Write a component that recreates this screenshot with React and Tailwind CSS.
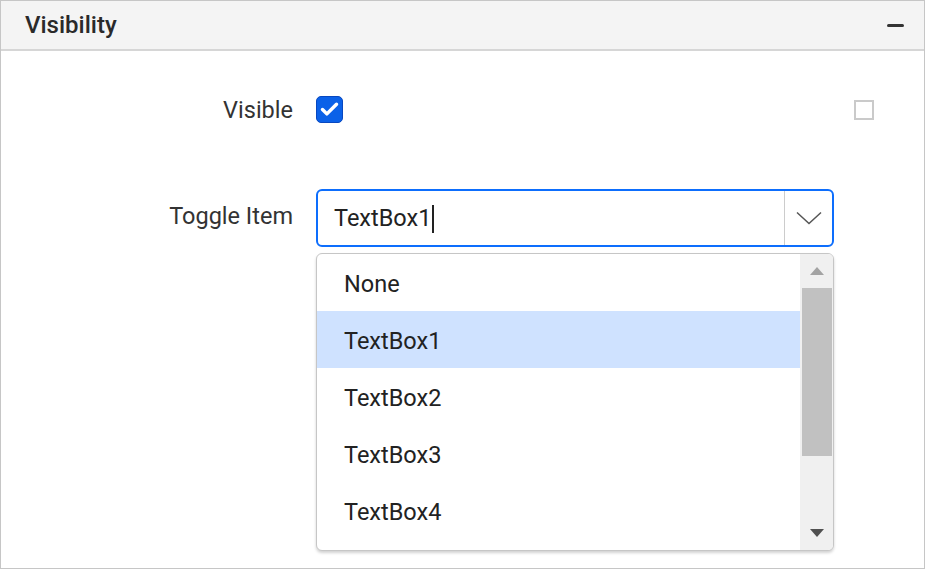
import { Check } from "lucide-react";

const items = ["None", "TextBox1", "TextBox2", "TextBox3", "TextBox4"];

export default function App() {
  return (
    <div
      className="w-[925px] h-[569px] border border-[#c6c6c6] bg-white text-[#333] overflow-hidden"
      style={{ fontFamily: "Roboto, 'Noto Sans', sans-serif" }}
    >
      {/* Header */}
      <div className="flex h-[50px] items-center justify-between border-b-2 border-[#d6d6d6] bg-[#f4f4f4] pl-6 pr-5">
        <span className="text-[24px] font-medium text-[#2a2a2a]">Visibility</span>
        <span className="block h-[3px] w-[17px] rounded-sm bg-[#333]" />
      </div>

      <div>
        {/* Visible row */}
        <div className="mt-[45px] flex h-[27px] items-center">
          <div className="w-[292px] pt-[3px] text-right text-[23.5px]">Visible</div>
          <div className="ml-[23px] flex h-[27px] w-[27px] items-center justify-center rounded-[5px] border border-[#0848c0] bg-[#0b61e8]">
            <Check size={21} strokeWidth={4} className="text-white" />
          </div>
          <div className="ml-auto mr-[50px] h-[20px] w-[20px] border-2 border-[#cacaca] bg-white" />
        </div>

        {/* Toggle item row */}
        <div className="mt-[66px] flex items-start">
          <div className="w-[292px] pt-[10px] text-right text-[23.5px]">Toggle Item</div>
          <div className="ml-[23px] w-[518px]">
            <div className="flex h-[58px] items-center rounded-[6px] border-2 border-[#0d6efd] bg-white">
              <div className="flex flex-1 items-center pl-[16px] pt-[2px] text-[23.5px] text-[#222]">
                TextBox1
                <span className="ml-[1px] inline-block h-[28px] w-[1.5px] bg-[#222]" />
              </div>
              <div className="flex h-full w-[48px] items-center justify-center border-l border-[#cccccc]">
                <svg width="26" height="14" viewBox="0 0 26 14" fill="none">
                  <path d="M1 1.5 L13 12.5 L25 1.5" stroke="#555" strokeWidth="1.5" />
                </svg>
              </div>
            </div>

            {/* Dropdown popup */}
            <div className="mt-[6px] flex h-[298px] overflow-hidden rounded-[6px] border border-[#c6c6c6] bg-white shadow-[0_2px_3px_rgba(0,0,0,0.18)]">
              <div className="flex-1 overflow-hidden">
                {items.map((it) => (
                  <div
                    key={it}
                    className={`flex h-[57px] items-center pl-[27px] pt-[4px] text-[23.5px] text-[#222] ${
                      it === "TextBox1" ? "bg-[#cfe2ff]" : ""
                    }`}
                  >
                    {it}
                  </div>
                ))}
              </div>
              <div className="flex w-[33px] flex-col items-center bg-[#f0f0f0]">
                <div className="flex h-[34px] items-center justify-center">
                  <div className="h-0 w-0 border-x-[7px] border-b-[8px] border-x-transparent border-b-[#a3a3a3]" />
                </div>
                <div className="h-[168px] w-[30px] bg-[#c1c1c1]" />
                <div className="flex-1" />
                <div className="flex h-[34px] items-center justify-center">
                  <div className="h-0 w-0 border-x-[7px] border-t-[8px] border-x-transparent border-t-[#505050]" />
                </div>
              </div>
            </div>
          </div>
        </div>
      </div>
    </div>
  );
}
